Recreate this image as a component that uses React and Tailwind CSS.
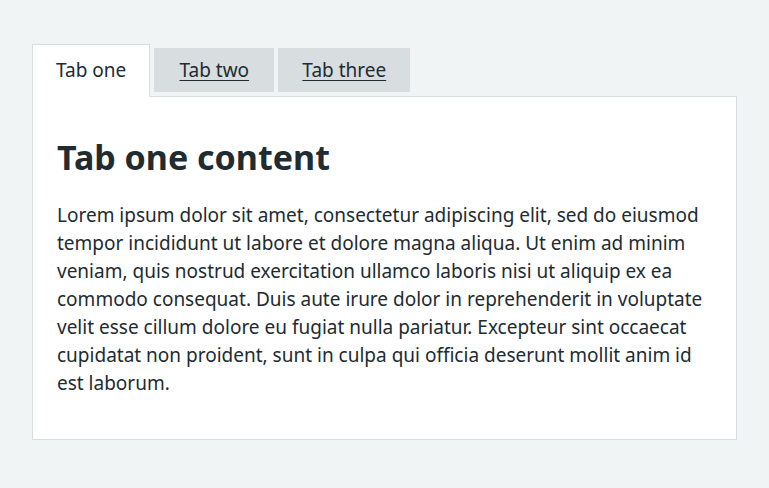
export default function App() {
  const tabs = [
    { label: "Tab one", w: "" },
    { label: "Tab two", w: "w-[120px]" },
    { label: "Tab three", w: "w-[132px]" },
  ];
  return (
    <div className="min-h-[488px] bg-[#f0f4f5] pl-8 pr-8 pt-[44px] text-[#212b32]" style={{ fontFamily: '"Noto Sans", Arial, sans-serif' }}>
      <div className="flex items-start">
        {tabs.map((t, i) =>
          i === 0 ? (
            <div key={t.label} className="relative z-10 -mb-px mr-1 flex h-[53px] items-start border border-b-0 border-[#d8dde0] bg-white px-[23px] pt-[11px] text-[19px] leading-7">
              {t.label}
            </div>
          ) : (
            <a key={t.label} href="#" className={`mr-1 mt-1 flex h-[44px] items-center justify-center bg-[#d8dde0] text-[19px] leading-7 text-[#212b32] underline underline-offset-[3px] ${t.w}`}>
              {t.label}
            </a>
          )
        )}
      </div>
      <div className="w-[705px] border border-[#d8dde0] bg-white px-6 pb-[42px] pt-[40px]">
        <h2 className="mb-6 text-[34px] font-bold leading-10">Tab one content</h2>
        <p className="text-[19px] leading-7">
          Lorem ipsum dolor sit amet, consectetur adipiscing elit, sed do eiusmod tempor incididunt ut labore et dolore magna aliqua. Ut enim ad minim veniam, quis nostrud exercitation ullamco laboris nisi ut aliquip ex ea commodo consequat. Duis aute irure dolor in reprehenderit in voluptate velit esse cillum dolore eu fugiat nulla pariatur. Excepteur sint occaecat cupidatat non proident, sunt in culpa qui officia deserunt mollit anim id est laborum.
        </p>
      </div>
    </div>
  );
}
